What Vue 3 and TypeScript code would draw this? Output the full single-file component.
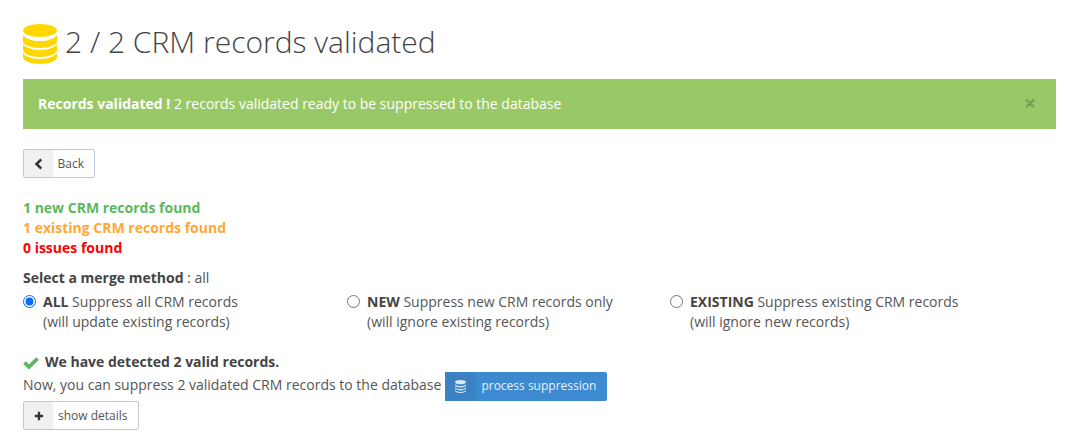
<template>
  <div class="page">
    <h1 class="title">
      <svg class="title-icon" viewBox="0 0 34 40" width="34" height="40" fill="#ffd700">
        <path v-for="d in dbLayers" :key="d" :d="d" />
      </svg>
      2 / 2 CRM records validated
    </h1>

    <div class="alert">
      <div><strong>Records validated !</strong> 2 records validated ready to be suppressed to the database</div>
      <span class="close">×</span>
    </div>

    <button class="btn back" type="button">
      <span class="btn-icon">
        <svg viewBox="0 0 10 14" width="9" height="12"><path d="M8.2 1.5 2.7 7l5.5 5.5" fill="none" stroke="#333" stroke-width="3" /></svg>
      </span>
      <span class="btn-label">Back</span>
    </button>

    <div class="counts">
      <div class="new">1 new CRM records found</div>
      <div class="existing">1 existing CRM records found</div>
      <div class="issues">0 issues found</div>
    </div>

    <div class="merge-title"><strong>Select a merge method</strong> : all</div>
    <div class="options">
      <label v-for="opt in options" :key="opt.name" class="option">
        <input type="radio" name="merge" :checked="opt.name === 'ALL'" />
        <span><strong>{{ opt.name }}</strong> {{ opt.text }}<br />{{ opt.note }}</span>
      </label>
    </div>

    <div class="valid">
      <svg viewBox="0 0 16 13" width="16" height="13"><path d="M1.5 6.5 6 11 14.5 2.5" fill="none" stroke="#5cb85c" stroke-width="3.8" /></svg>
      <strong>We have detected 2 valid records.</strong>
    </div>
    <div class="now">
      <span class="now-text">Now, you can suppress 2 validated CRM records to the database</span>
      <button class="btn primary" type="button">
        <span class="btn-icon">
          <svg viewBox="0 0 34 40" width="11" height="13" fill="#dceaf7">
            <path v-for="d in smallDbLayers" :key="d" :d="d" />
          </svg>
        </span>
        <span class="btn-label">process suppression</span>
      </button>
    </div>
    <button class="btn details" type="button">
      <span class="btn-icon">
        <svg viewBox="0 0 12 12" width="10" height="10"><path d="M6 1v10M1 6h10" fill="none" stroke="#333" stroke-width="2.8" /></svg>
      </span>
      <span class="btn-label">show details</span>
    </button>
  </div>
</template>

<script setup lang="ts">
const options = [
  { name: 'ALL', text: 'Suppress all CRM records', note: '(will update existing records)' },
  { name: 'NEW', text: 'Suppress new CRM records only', note: '(will ignore existing records)' },
  { name: 'EXISTING', text: 'Suppress existing CRM records', note: '(will ignore new records)' },
];

const dbLayers = [
  'M0 6.5C0 2.9 7.6 0 17 0s17 2.9 17 6.5S26.4 13 17 13 0 10.1 0 6.5z',
  'M0 11c3 4 10 6 17 6s14-2 17-6v6c0 4-8 7-17 7S0 21 0 17z',
  'M0 20c3 4 10 6 17 6s14-2 17-6v6c0 4-8 7-17 7S0 30 0 26z',
  'M0 29c3 4 10 6 17 6s14-2 17-6v4c0 4-8 7-17 7S0 37 0 33z',
];

// thinner layers so the gaps survive at 13px
const smallDbLayers = [
  'M0 6.5C0 2.9 7.6 0 17 0s17 2.9 17 6.5S26.4 13 17 13 0 10.1 0 6.5z',
  'M0 13c3 4 10 6 17 6s14-2 17-6v3c0 4-8 7-17 7S0 20 0 16z',
  'M0 22c3 4 10 6 17 6s14-2 17-6v3c0 4-8 7-17 7S0 29 0 25z',
  'M0 31c3 4 10 6 17 6s14-2 17-6v2c0 4-8 7-17 7S0 37 0 33z',
];
</script>

<style>
body {
  background: #fff;
}
</style>

<style scoped>
.page {
  width: 1033px;
  padding: 20px 9px 0 23px;
  font-family: "Open Sans", sans-serif;
  font-size: 14px;
  line-height: 20px;
  color: #555;
}

strong {
  font-weight: 700;
  color: #444;
}

.title {
  display: flex;
  align-items: center;
  gap: 8px;
  height: 44px;
  margin: 0 0 15px;
  font-size: 30px;
  font-weight: 300;
  color: #444;
}

.title-icon {
  flex: none;
  align-self: flex-start;
  margin-top: 4px;
}

.alert {
  display: flex;
  justify-content: space-between;
  align-items: center;
  height: 50px;
  padding: 0 20px 0 15px;
  margin-bottom: 20px;
  background: #99c966;
  color: #fff;
}

.alert strong {
  color: #fff;
}

.close {
  margin-top: -2px;
  font-size: 21px;
  font-weight: 700;
  color: #000;
  opacity: 0.2;
}

.btn {
  display: flex;
  align-items: stretch;
  height: 29px;
  padding: 0;
  border: 1px solid #bcc9dc;
  border-radius: 2px;
  background: #fff;
  font-family: inherit;
  font-size: 12px;
  color: #555;
}

.btn-icon {
  display: flex;
  align-items: center;
  justify-content: center;
  width: 29px;
  background: #f0f0f0;
}

.btn-label {
  display: flex;
  align-items: center;
  padding: 0 10px 0 5px;
}

.back {
  width: 72px;
  margin-bottom: 20px;
}

.counts {
  font-weight: 700;
  margin-bottom: 10px;
}

.new {
  color: #5cb85c;
}

.existing {
  color: #ffa834;
}

.issues {
  color: #f00;
}

.merge-title {
  margin-bottom: 4px;
}

.options {
  display: grid;
  grid-template-columns: 324px 323px 1fr;
  margin-bottom: 20px;
}

.option {
  display: flex;
  gap: 7px;
}

.option input {
  width: 13px;
  height: 13px;
  margin: 3px 0 0;
  accent-color: #0a6cf5;
}

.valid {
  display: flex;
  align-items: center;
  gap: 6px;
  height: 20px;
}

.now {
  display: flex;
  align-items: center;
  gap: 4px;
  height: 29px;
}

.now-text {
  margin-bottom: 3px;
}

.primary {
  width: 162px;
  border: none;
  background: #3e8ad0;
  color: #e6f0fa;
}

.primary .btn-icon {
  width: 31px;
  padding-bottom: 1px;
  background: #3b82c4;
}

.primary .btn-label {
  padding: 0 10px 2px 5px;
}

.details {
  width: 116px;
}
</style>
